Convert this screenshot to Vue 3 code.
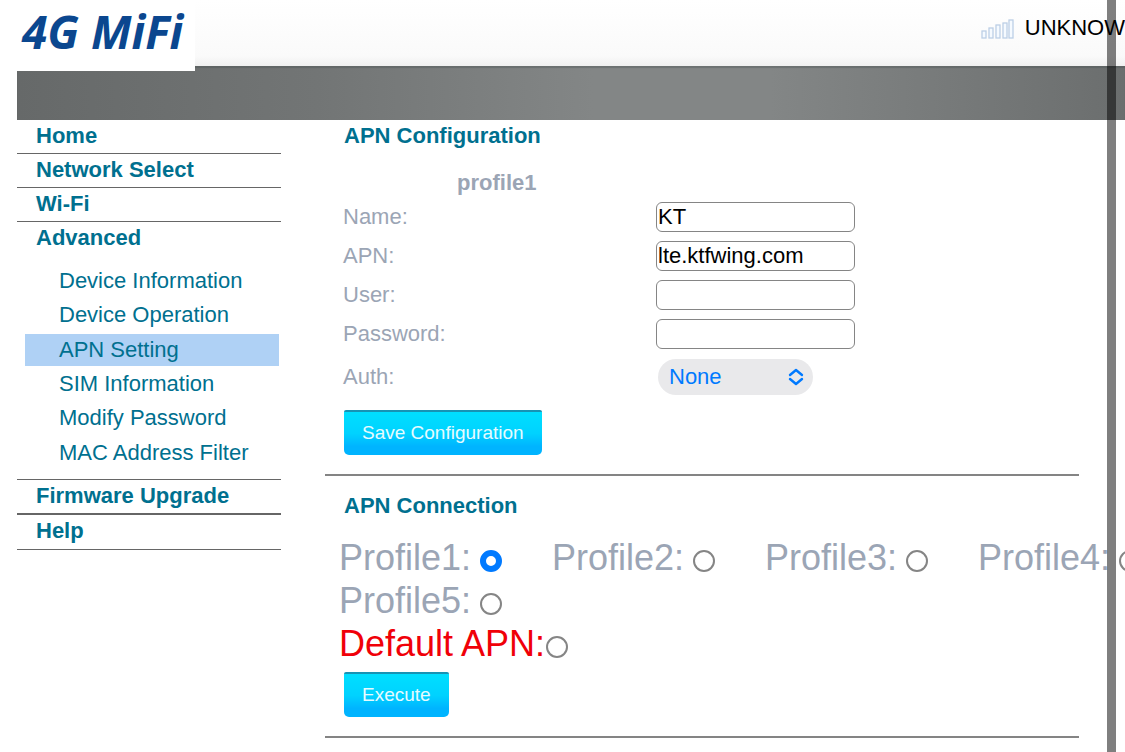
<script setup>
import { ref } from 'vue'

const bars = [
  { x: 1, h: 7 },
  { x: 8, h: 10 },
  { x: 15, h: 13 },
  { x: 22, h: 15 },
  { x: 28, h: 18 },
]
const topMenu = ['Home', 'Network Select', 'Wi-Fi']
const subMenu = [
  'Device Information',
  'Device Operation',
  'APN Setting',
  'SIM Information',
  'Modify Password',
  'MAC Address Filter',
]
const active = ref('APN Setting')
const fields = ref([
  { id: 'name', label: 'Name:', value: 'KT', type: 'text' },
  { id: 'apn', label: 'APN:', value: 'lte.ktfwing.com', type: 'text' },
  { id: 'user', label: 'User:', value: '', type: 'text' },
  { id: 'password', label: 'Password:', value: '', type: 'password' },
])
const auth = ref('None')
const profile = ref(1)
</script>

<template>
  <div class="page">
    <header class="header">
      <div class="top">
        <div class="logo">4G MiFi</div>
        <div class="status">
          <svg class="signal" width="34" height="22" viewBox="0 0 34 22" aria-hidden="true">
            <rect v-for="b in bars" :key="b.x" :x="b.x" :y="21 - b.h" width="4" :height="b.h" />
          </svg>
          <span>UNKNOW</span>
        </div>
      </div>
      <div class="band"></div>
    </header>

    <div class="body">
      <nav class="menu">
        <a v-for="m in topMenu" :key="m" class="item" href="#">{{ m }}</a>
        <a class="item open" href="#">Advanced</a>
        <div class="sub">
          <a
            v-for="s in subMenu"
            :key="s"
            href="#"
            class="sub-item"
            :class="{ active: s === active }"
            @click.prevent="active = s"
          >{{ s }}</a>
        </div>
        <a class="item tall thick" href="#">Firmware Upgrade</a>
        <a class="item tall" href="#">Help</a>
      </nav>

      <main class="content">
        <section class="section">
          <h2>APN Configuration</h2>
          <h3>profile1</h3>
          <form class="form" @submit.prevent>
            <div v-for="f in fields" :key="f.id" class="row">
              <label :for="f.id">{{ f.label }}</label>
              <input :id="f.id" v-model="f.value" class="field" :type="f.type" />
            </div>
            <div class="row auth">
              <label for="auth">Auth:</label>
              <div class="select">
                <select id="auth" v-model="auth">
                  <option>None</option>
                  <option>PAP</option>
                  <option>CHAP</option>
                </select>
                <svg class="chevrons" width="16" height="18" viewBox="0 0 16 18" aria-hidden="true">
                  <path d="M2 7 8 2l6 5M2 11l6 5 6-5" />
                </svg>
              </div>
            </div>
            <button class="btn" type="submit">Save Configuration</button>
          </form>
        </section>

        <section class="section">
          <h2>APN Connection</h2>
          <form class="connect" @submit.prevent>
            <div class="profiles">
              <label v-for="n in 5" :key="n" class="choice">
                <span>Profile{{ n }}:</span>
                <input v-model="profile" type="radio" name="profile" :value="n" />
              </label>
            </div>
            <label class="choice default">
              <span>Default APN:</span>
              <input v-model="profile" type="radio" name="profile" :value="0" />
            </label>
            <button class="btn" type="submit">Execute</button>
          </form>
        </section>
      </main>
    </div>
    <div class="scrollbar"></div>
  </div>
</template>

<style>
body {
  margin: 0;
  background: #fff;
  overflow: hidden;
}
</style>

<style scoped>
.page {
  position: relative;
  min-height: 100vh;
  overflow: hidden;
  font: 22px/30px "Liberation Sans", Arial, sans-serif;
  color: #9ba5b5;
}
.header {
  margin-left: 17px;
}
.top {
  display: flex;
  justify-content: space-between;
  height: 66px;
  background: linear-gradient(#fff, #fafafa 85%, #f0f0f0);
}
.logo {
  position: relative;
  box-sizing: border-box;
  width: 178px;
  height: 71px;
  padding-left: 5px;
  background: #fff;
  color: #0b478f;
  font: italic bold 46px/62px "Open Sans", sans-serif;
  white-space: nowrap;
}
.status {
  display: flex;
  align-items: center;
  gap: 10px;
  height: 56px;
  color: #000;
}
.signal {
  fill: #f5faff;
  stroke: #bccfe6;
  stroke-width: 1.3;
}
.band {
  height: 54px;
  background: linear-gradient(90deg, #666969, #727575 27%, #838686 52%, #838686 68%, #6b6e6e);
  box-shadow: inset 0 2px 1px rgba(70, 76, 76, 0.35);
}
.body {
  display: flex;
  align-items: flex-start;
  gap: 44px;
  padding: 0 46px 0 17px;
}
.menu {
  flex: none;
  width: 264px;
}
.menu a {
  display: block;
  box-sizing: border-box;
  color: #00708f;
  text-decoration: none;
}
.menu .item {
  height: 34px;
  padding-left: 19px;
  border-bottom: 1px solid #666;
  font-weight: bold;
  line-height: 32px;
}
.menu .open {
  border-bottom: 0;
}
.menu .tall {
  height: 35px;
}
.menu .thick {
  border-bottom: 2px solid #666;
}
.sub {
  display: grid;
  grid-template-rows: repeat(6, 1fr);
  gap: 2px;
  height: 204px;
  padding: 9px 2px 10px 8px;
  border-bottom: 1px solid #666;
}
.sub-item {
  padding-left: 34px;
  line-height: 32px;
}
.sub-item.active {
  background: #afd1f5;
}
.content {
  flex: 1;
  min-width: 0;
}
.section {
  border-bottom: 2px solid #848484;
  padding: 0 0 19px 18px;
}
.section + .section {
  padding-top: 14px;
}
h2,
h3 {
  margin: 0;
  font-size: 22px;
  line-height: 32px;
}
h2 {
  padding-left: 1px;
  color: #00708f;
}
h3 {
  margin: 15px 0 3px;
  padding-left: 114px;
}
.form {
  display: flex;
  flex-direction: column;
  align-items: flex-start;
  gap: 9px;
}
.row {
  display: grid;
  grid-template-columns: 313px 199px;
  align-items: center;
}
.field {
  box-sizing: border-box;
  width: 100%;
  height: 30px;
  padding: 0 1px;
  border: 1px solid #858585;
  border-radius: 6px;
  background: #fff;
  color: #000;
  font: inherit;
}
.select {
  position: relative;
  width: 155px;
  margin-left: 2px;
}
.auth {
  margin: 1px 0 6px;
}
select {
  display: block;
  appearance: none;
  width: 100%;
  height: 36px;
  padding: 0 11px;
  border: 0;
  border-radius: 18px;
  background: #e9e9eb;
  color: #007aff;
  font: inherit;
}
.chevrons {
  position: absolute;
  top: 9px;
  right: 9px;
  fill: none;
  stroke: #007aff;
  stroke-width: 2.4;
  stroke-linecap: round;
  stroke-linejoin: round;
  pointer-events: none;
}
.btn {
  height: 45px;
  margin-left: 1px;
  padding: 0 18px 2px;
  border: 0;
  border-top: 2px solid #1793b4;
  border-radius: 2px 2px 5px 5px;
  background: linear-gradient(#00dfff, #00d2ff 50%, #00b4ff 80%);
  color: #e6fbff;
  font: 19px "Liberation Sans", Arial, sans-serif;
}
.connect {
  padding-top: 14px;
}
.profiles {
  display: grid;
  grid-template-columns: repeat(4, 213px);
  margin-left: -4px;
}
.choice {
  display: flex;
  align-items: center;
  gap: 9px;
  font-size: 36px;
  line-height: 43px;
  white-space: nowrap;
}
.choice.default {
  gap: 1px;
  margin: 0 0 7px -4px;
  color: #f00008;
}
.choice input {
  flex: none;
  appearance: none;
  box-sizing: border-box;
  width: 22px;
  height: 22px;
  margin: 7px 0 0;
  border: 2px solid #858585;
  border-radius: 50%;
  background: #fff;
}
.choice input:checked {
  border: 6px solid #007aff;
}
.scrollbar {
  position: absolute;
  top: 0;
  right: 9px;
  bottom: 0;
  width: 9px;
  background: rgba(0, 0, 0, 0.5);
}
</style>
